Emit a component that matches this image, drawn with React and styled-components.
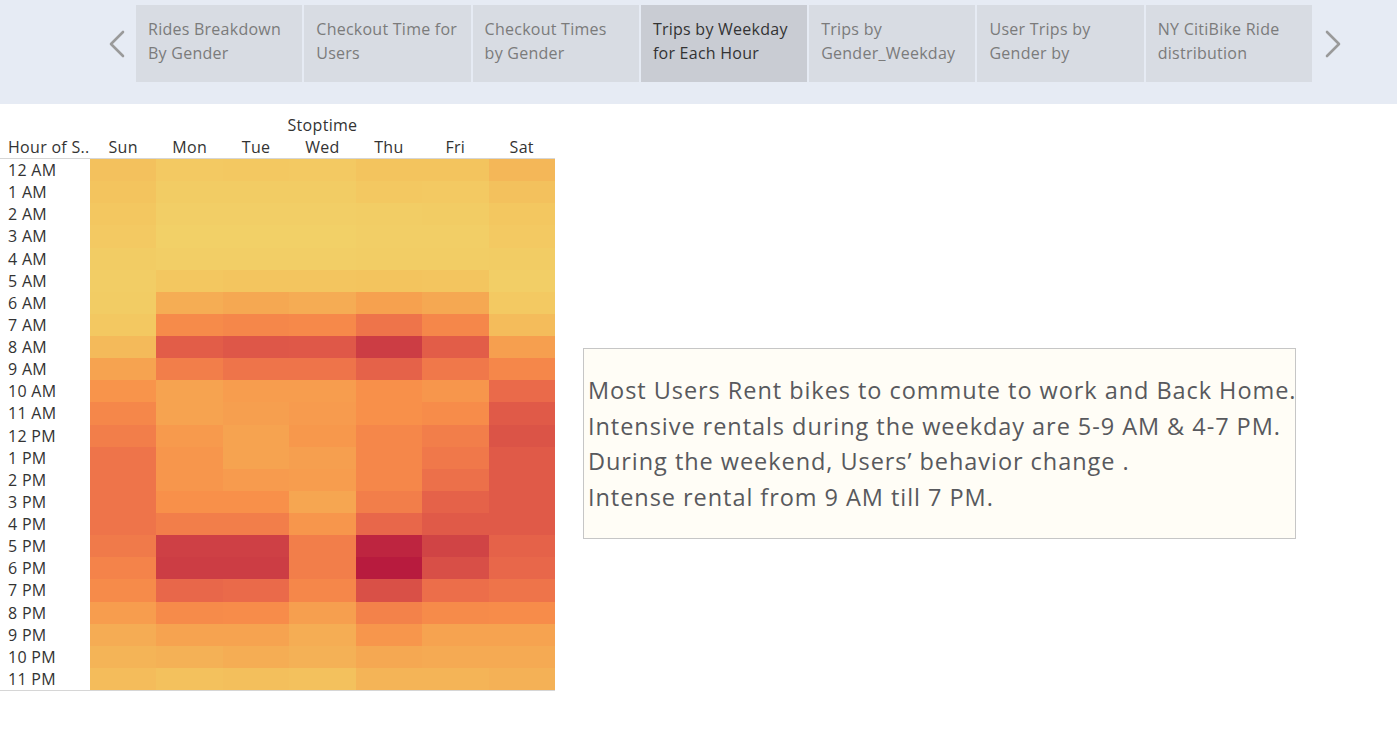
import React from "react";
import styled, { createGlobalStyle } from "styled-components";

const GlobalStyle = createGlobalStyle`
  html, body { margin: 0; padding: 0; background: #ffffff; }
  body { font-family: "Open Sans", "Liberation Sans", sans-serif; }
`;

const Page = styled.div`
  width: 1397px;
  height: 737px;
  overflow: hidden;
  background: #fff;
`;

const NavBar = styled.div`
  height: 104px;
  background: #e6ebf4;
  display: flex;
  align-items: flex-start;
  padding: 5px 0 0 104px;
  box-sizing: border-box;
`;

const Arrow = styled.div`
  width: 32px;
  height: 77px;
  display: flex;
  align-items: center;
  padding-left: ${(p) => (p.$right ? "12px" : "4px")};
  box-sizing: border-box;
  flex: 0 0 auto;
`;

const Tabs = styled.div`
  display: flex;
  gap: 2px;
`;

const Tab = styled.div`
  width: 166.3px;
  height: 77px;
  box-sizing: border-box;
  padding: 12px 6px 0 12px;
  background: ${(p) => (p.$active ? "#c9ccd3" : "#d8dce3")};
  color: ${(p) => (p.$active ? "#333" : "#7b7b7b")};
  font-size: 16px;
  line-height: 24px;
  letter-spacing: 0.25px;
  white-space: nowrap;
`;

const Main = styled.div`
  display: flex;
  align-items: flex-start;
`;

const Chart = styled.div`
  display: grid;
  grid-template-columns: 90px repeat(7, 66.43px);
  padding-top: 10px;
  font-size: 16px;
  color: #333;
`;

const Title = styled.div`
  grid-column: 2 / span 7;
  height: 22px;
  line-height: 22px;
  text-align: center;
  letter-spacing: 0.3px;
`;

const ColHead = styled.div`
  height: 22px;
  line-height: 22px;
  text-align: ${(p) => (p.$left ? "left" : "center")};
  padding-left: ${(p) => (p.$left ? "8px" : "0")};
  border-bottom: 1px solid #d6d6d6;
  white-space: nowrap;
  letter-spacing: 0.3px;
`;

const RowLabel = styled.div`
  height: 22.125px;
  line-height: 22px;
  padding-left: 8px;
  white-space: nowrap;
  letter-spacing: 0.3px;
  border-bottom: ${(p) => (p.$last ? "1px solid #d6d6d6" : "none")};
`;

const Cell = styled.div`
  height: 22.125px;
  border-bottom: ${(p) => (p.$last ? "1px solid #d6d6d6" : "none")};
`;

const Note = styled.div`
  margin: 244px 0 0 28px;
  width: 713px;
  height: 191px;
  box-sizing: border-box;
  border: 1px solid #c6c6c6;
  background: #fffdf6;
  padding: 24px 0 0 4px;
  font-size: 23.5px;
  line-height: 35.5px;
  color: #58595d;
  white-space: nowrap;
  letter-spacing: 0.95px;
`;

const Chevron = ({ dir }) => (
  <svg width="18" height="28" viewBox="0 0 18 28">
    <polyline
      points={dir === "left" ? "15,2 3,14 15,26" : "3,2 15,14 3,26"}
      fill="none"
      stroke="#9a9a9a"
      strokeWidth="2.6"
      strokeLinecap="round"
      strokeLinejoin="round"
    />
  </svg>
);

const tabs = [
  ["Rides Breakdown", "By Gender"],
  ["Checkout Time for", "Users"],
  ["Checkout Times", "by Gender"],
  ["Trips by Weekday", "for Each Hour"],
  ["Trips by", "Gender_Weekday"],
  ["User Trips by", "Gender by"],
  ["NY CitiBike Ride", "distribution"],
];

const days = ["Sun", "Mon", "Tue", "Wed", "Thu", "Fri", "Sat"];
const hours = [
  "12 AM", "1 AM", "2 AM", "3 AM", "4 AM", "5 AM", "6 AM", "7 AM", "8 AM", "9 AM",
  "10 AM", "11 AM", "12 PM", "1 PM", "2 PM", "3 PM", "4 PM", "5 PM", "6 PM", "7 PM",
  "8 PM", "9 PM", "10 PM", "11 PM",
];

const values = [
  [0.12, 0.06, 0.07, 0.06, 0.1, 0.1, 0.18],
  [0.1, 0.04, 0.04, 0.04, 0.07, 0.06, 0.12],
  [0.08, 0.02, 0.02, 0.02, 0.03, 0.04, 0.08],
  [0.06, 0.01, 0.01, 0.01, 0.02, 0.02, 0.06],
  [0.04, 0.02, 0.02, 0.02, 0.03, 0.03, 0.04],
  [0.03, 0.08, 0.09, 0.09, 0.1, 0.09, 0.02],
  [0.04, 0.24, 0.27, 0.25, 0.31, 0.27, 0.06],
  [0.07, 0.43, 0.45, 0.44, 0.55, 0.45, 0.15],
  [0.16, 0.68, 0.72, 0.71, 0.86, 0.68, 0.32],
  [0.3, 0.5, 0.55, 0.55, 0.65, 0.53, 0.45],
  [0.38, 0.3, 0.33, 0.33, 0.4, 0.37, 0.6],
  [0.45, 0.3, 0.32, 0.34, 0.4, 0.42, 0.7],
  [0.5, 0.35, 0.3, 0.36, 0.45, 0.5, 0.74],
  [0.55, 0.37, 0.3, 0.32, 0.45, 0.53, 0.7],
  [0.55, 0.37, 0.34, 0.33, 0.45, 0.57, 0.7],
  [0.55, 0.4, 0.4, 0.28, 0.5, 0.65, 0.7],
  [0.55, 0.5, 0.5, 0.37, 0.62, 0.7, 0.7],
  [0.52, 0.85, 0.85, 0.5, 0.96, 0.83, 0.65],
  [0.47, 0.86, 0.86, 0.5, 1.0, 0.77, 0.62],
  [0.43, 0.62, 0.6, 0.45, 0.76, 0.58, 0.55],
  [0.33, 0.43, 0.42, 0.32, 0.48, 0.43, 0.42],
  [0.25, 0.3, 0.3, 0.24, 0.37, 0.3, 0.3],
  [0.2, 0.22, 0.24, 0.22, 0.27, 0.26, 0.26],
  [0.15, 0.12, 0.13, 0.12, 0.2, 0.2, 0.22],
];

const stops = [
  "#f2d168", "#f3c45e", "#f4b457", "#f6a350", "#f8904a", "#f27e4a",
  "#ea6a4a", "#e05a48", "#d44a46", "#c73543", "#b81b3e",
];

const hex = (h) => [1, 3, 5].map((i) => parseInt(h.slice(i, i + 2), 16));
const colorFor = (t) => {
  const x = Math.max(0, Math.min(1, t)) * (stops.length - 1);
  const i = Math.min(stops.length - 2, Math.floor(x));
  const f = x - i;
  const a = hex(stops[i]);
  const b = hex(stops[i + 1]);
  const c = a.map((v, k) => Math.round(v + (b[k] - v) * f));
  return `rgb(${c[0]}, ${c[1]}, ${c[2]})`;
};

export default function App() {
  return (
    <Page>
      <GlobalStyle />
      <NavBar>
        <Arrow>
          <Chevron dir="left" />
        </Arrow>
        <Tabs>
          {tabs.map(([a, b], i) => (
            <Tab key={i} $active={i === 3}>
              {a}
              <br />
              {b}
            </Tab>
          ))}
        </Tabs>
        <Arrow $right>
          <Chevron dir="right" />
        </Arrow>
      </NavBar>
      <Main>
        <Chart>
          <div />
          <Title>Stoptime</Title>
          <ColHead $left>Hour of S..</ColHead>
          {days.map((d) => (
            <ColHead key={d}>{d}</ColHead>
          ))}
          {hours.map((h, r) => (
            <React.Fragment key={h}>
              <RowLabel $last={r === 23}>{h}</RowLabel>
              {values[r].map((v, c) => (
                <Cell
                  key={c}
                  $last={r === 23}
                  style={{ background: colorFor(v) }}
                />
              ))}
            </React.Fragment>
          ))}
        </Chart>
        <Note>
          Most Users Rent bikes to commute to work and Back Home.
          <br />
          Intensive rentals during the weekday are 5-9 AM &amp; 4-7 PM.
          <br />
          During the weekend, Users’ behavior change .
          <br />
          Intense rental from 9 AM till 7 PM.
        </Note>
      </Main>
    </Page>
  );
}
